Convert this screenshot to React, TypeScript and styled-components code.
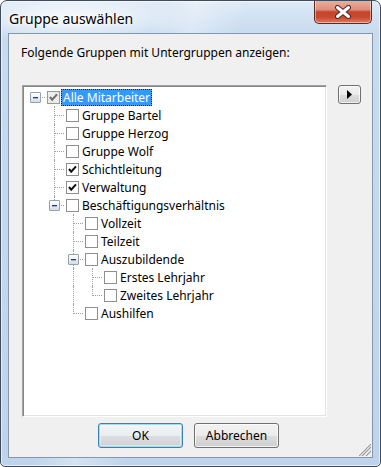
import React from "react";
import styled, { createGlobalStyle } from "styled-components";

const GlobalStyle = createGlobalStyle`
  html, body { margin: 0; padding: 0; background: #fff; }
  body {
    font-family: "Noto Sans", "Liberation Sans", sans-serif;
    font-size: 12px;
    color: #000;
  }
`;

type CheckState = "on" | "off" | "mixed";
type TreeNode = { label: string; state?: CheckState; selected?: boolean; children?: TreeNode[] };

const data: TreeNode = {
  label: "Alle Mitarbeiter",
  state: "mixed",
  selected: true,
  children: [
    { label: "Gruppe Bartel" },
    { label: "Gruppe Herzog" },
    { label: "Gruppe Wolf" },
    { label: "Schichtleitung", state: "on" },
    { label: "Verwaltung", state: "on" },
    {
      label: "Beschäftigungsverhältnis",
      children: [
        { label: "Vollzeit" },
        { label: "Teilzeit" },
        {
          label: "Auszubildende",
          children: [{ label: "Erstes Lehrjahr" }, { label: "Zweites Lehrjahr" }],
        },
        { label: "Aushilfen" },
      ],
    },
  ],
};

type FlatRow = { node: TreeNode; level: number; guides: boolean[]; isLast: boolean };

const flatten = (node: TreeNode, level: number, guides: boolean[], isLast: boolean, out: FlatRow[]) => {
  out.push({ node, level, guides, isLast });
  const kids = node.children || [];
  kids.forEach((kid, i) =>
    flatten(kid, level + 1, [...guides, level === 0 ? false : !isLast], i === kids.length - 1, out)
  );
  return out;
};

const Window = styled.div`
  box-sizing: border-box;
  width: 381px;
  height: 467px;
  border: 1px solid #3d4b5c;
  border-radius: 7px 7px 5px 5px;
  overflow: hidden;
  display: flex;
  flex-direction: column;
  background:
    radial-gradient(ellipse 120px 26px at 70px 17px, rgba(255, 255, 255, 0.85), rgba(255, 255, 255, 0) 100%),
    linear-gradient(105deg, rgba(255, 255, 255, 0) 150px, rgba(255, 255, 255, 0.35) 190px, rgba(255, 255, 255, 0) 240px),
    linear-gradient(180deg, #dde9f6 0px, #c8dbef 32px, #bed4ec 100%);
  box-shadow: inset 0 0 0 1px rgba(255, 255, 255, 0.6);
`;

const TitleBar = styled.div`
  height: 32px;
  flex: none;
  display: flex;
  align-items: flex-start;
  justify-content: space-between;
  padding-left: 8px;
`;

const Title = styled.div`
  margin-top: 9px;
  font-size: 14px;
  line-height: 18px;
  color: #000;
  text-shadow: 0 0 6px #fff, 0 0 3px #fff;
`;

const CloseButton = styled.div`
  box-sizing: border-box;
  width: 58px;
  height: 24px;
  margin-top: -1px;
  margin-right: 8px;
  border: 1px solid #5e2a20;
  border-top: none;
  border-radius: 0 0 5px 5px;
  background: linear-gradient(180deg, #eab1a2 0%, #de8e7b 42%, #c7432b 52%, #c84a30 75%, #e27a5e 100%);
  box-shadow: inset 0 0 0 1px rgba(255, 255, 255, 0.45);
  display: flex;
  align-items: center;
  justify-content: center;
`;

const Client = styled.div`
  flex: 1;
  margin: 0 7px 8px;
  border: 1px solid #8497ad;
  background: #f0f0f0;
  display: flex;
  flex-direction: column;
  position: relative;
`;

const Prompt = styled.div`
  margin: 11px 0 0 12px;
  line-height: 15px;
`;

const TreeArea = styled.div`
  display: flex;
  align-items: flex-start;
  gap: 11px;
  margin: 25px 0 0 13px;
`;

const TreeBox = styled.div`
  box-sizing: border-box;
  width: 305px;
  height: 332px;
  background: #fff;
  border: 1px solid;
  border-color: #a0a0a0 #ffffff #ffffff #a0a0a0;
  box-shadow: inset 1px 1px 0 #828790, inset -1px -1px 0 #e3e3e3;
  padding: 2px 0 0 3px;
`;

const Row = styled.div`
  display: flex;
  align-items: center;
  height: 18px;
`;

const Cell = styled.div<{ $up?: boolean; $down?: boolean; $right?: boolean }>`
  position: relative;
  width: 19px;
  height: 18px;
  flex: none;

  &::before {
    content: "";
    display: ${(p) => (p.$up || p.$down ? "block" : "none")};
    position: absolute;
    left: 9px;
    top: ${(p) => (p.$up ? "0" : "9px")};
    bottom: ${(p) => (p.$down ? "0" : "8px")};
    border-left: 1px dotted #a0a0a0;
  }

  &::after {
    content: "";
    display: ${(p) => (p.$right ? "block" : "none")};
    position: absolute;
    left: 10px;
    right: 0;
    top: 9px;
    border-top: 1px dotted #a0a0a0;
  }
`;

const Expander = styled.div`
  position: absolute;
  z-index: 1;
  left: 4px;
  top: 4px;
  box-sizing: border-box;
  width: 11px;
  height: 11px;
  border: 1px solid #96a0ae;
  border-radius: 1px;
  background: linear-gradient(180deg, #ffffff 0%, #f0f0f0 50%, #d6dbe2 100%);
  display: flex;
  align-items: center;
  justify-content: center;

  &::after {
    content: "";
    width: 5px;
    height: 1px;
    background: #1f3e86;
    box-shadow: 0 1px 0 rgba(60, 95, 170, 0.45);
  }
`;

const Box = styled.div<{ $state: CheckState }>`
  box-sizing: border-box;
  flex: none;
  width: 13px;
  height: 13px;
  margin-left: 2px;
  border: 1px solid ${(p) => (p.$state === "mixed" ? "#9a9a9a" : "#8e8f8f")};
  background: ${(p) =>
    p.$state === "mixed"
      ? "repeating-linear-gradient(45deg, #e2e2e2 0 1px, #f4f4f4 1px 2px)"
      : "#fff"};
  display: flex;
  align-items: center;
  justify-content: center;
`;

const Label = styled.span<{ $selected?: boolean }>`
  margin-left: 1px;
  padding: 0 1px;
  line-height: 15px;
  white-space: nowrap;
  border: 1px solid transparent;
  color: ${(p) => (p.$selected ? "#fff" : "#000")};
  ${(p) =>
    p.$selected &&
    `
    border: 1px dotted #1a1a1a;
    background: linear-gradient(#3399ff, #3399ff) padding-box, linear-gradient(#d08a2a, #d08a2a) border-box;
  `}
`;

const ArrowButton = styled.div`
  box-sizing: border-box;
  width: 23px;
  height: 19px;
  flex: none;
  border: 1px solid #707070;
  border-radius: 3px;
  background: linear-gradient(180deg, #f2f2f2 0%, #ebebeb 50%, #dddddd 51%, #cfcfcf 100%);
  box-shadow: inset 0 0 0 1px rgba(255, 255, 255, 0.7);
  display: flex;
  align-items: center;
  justify-content: center;
`;

const ButtonRow = styled.div`
  display: flex;
  gap: 11px;
  margin-top: 6px;
  padding-left: 89px;
`;

const Button = styled.div<{ $default?: boolean }>`
  box-sizing: border-box;
  width: 85px;
  height: 25px;
  border: 1px solid ${(p) => (p.$default ? "#3c7fb1" : "#707070")};
  border-radius: 3px;
  background: ${(p) =>
    p.$default
      ? "linear-gradient(180deg, #f2f5f7 0%, #eaeef1 50%, #dcdfe2 51%, #cfd2d5 100%)"
      : "linear-gradient(180deg, #f2f2f2 0%, #ebebeb 50%, #dddddd 51%, #cfcfcf 100%)"};
  box-shadow: ${(p) =>
    p.$default ? "inset 0 0 0 1px #9fdcf7, inset 0 0 0 2px rgba(255,255,255,0.35)" : "inset 0 0 0 1px rgba(255,255,255,0.75)"};
  display: flex;
  align-items: center;
  justify-content: center;
  line-height: 15px;
`;

const Grip = styled.svg`
  position: absolute;
  right: 1px;
  bottom: 1px;
`;

const CheckMark = ({ color }: { color: string }) => (
  <svg width="9" height="9" viewBox="0 0 9 9">
    <polyline points="1,4 3.2,6.6 8,1.4" fill="none" stroke={color} strokeWidth="2.1" />
  </svg>
);

const TreeRow = ({ row }: { row: FlatRow }) => {
  const { node, level, guides, isLast } = row;
  const state = node.state || "off";
  return (
    <Row>
      {guides.map((g, i) => (
        <Cell key={i} $up={g} $down={g} />
      ))}
      <Cell $up={level > 0} $down={level > 0 && !isLast} $right>
        {node.children && <Expander />}
      </Cell>
      <Box $state={state}>
        {state === "on" && <CheckMark color="#111" />}
        {state === "mixed" && <CheckMark color="#6e6e6e" />}
      </Box>
      <Label $selected={node.selected}>{node.label}</Label>
    </Row>
  );
};

export default function App() {
  const rows = flatten(data, 0, [], true, []);
  return (
    <>
      <GlobalStyle />
      <Window>
        <TitleBar>
          <Title>Gruppe auswählen</Title>
          <CloseButton>
            <svg width="18" height="14" viewBox="0 0 18 14">
              <path d="M3.5 2.5 L14.5 11.5 M14.5 2.5 L3.5 11.5" stroke="#4a2a26" strokeWidth="5" strokeLinecap="round" />
              <path d="M3.5 2.5 L14.5 11.5 M14.5 2.5 L3.5 11.5" stroke="#fff" strokeWidth="3" strokeLinecap="round" />
            </svg>
          </CloseButton>
        </TitleBar>
        <Client>
          <Prompt>Folgende Gruppen mit Untergruppen anzeigen:</Prompt>
          <TreeArea>
            <TreeBox>
              {rows.map((r, i) => (
                <TreeRow key={i} row={r} />
              ))}
            </TreeBox>
            <ArrowButton>
              <svg width="5" height="9" viewBox="0 0 5 9">
                <polygon points="0,0 5,4.5 0,9" fill="#000" />
              </svg>
            </ArrowButton>
          </TreeArea>
          <ButtonRow>
            <Button $default>OK</Button>
            <Button>Abbrechen</Button>
          </ButtonRow>
          <Grip width="12" height="12" viewBox="0 0 12 12">
            <path d="M11 3 L3 11 M11 7 L7 11 M11 0 L0 11" stroke="#fff" strokeWidth="1" />
            <path d="M12 3 L3 12 M12 7 L7 12 M12 0 L0 12" stroke="#9a9a9a" strokeWidth="1.2" />
          </Grip>
        </Client>
      </Window>
    </>
  );
}
